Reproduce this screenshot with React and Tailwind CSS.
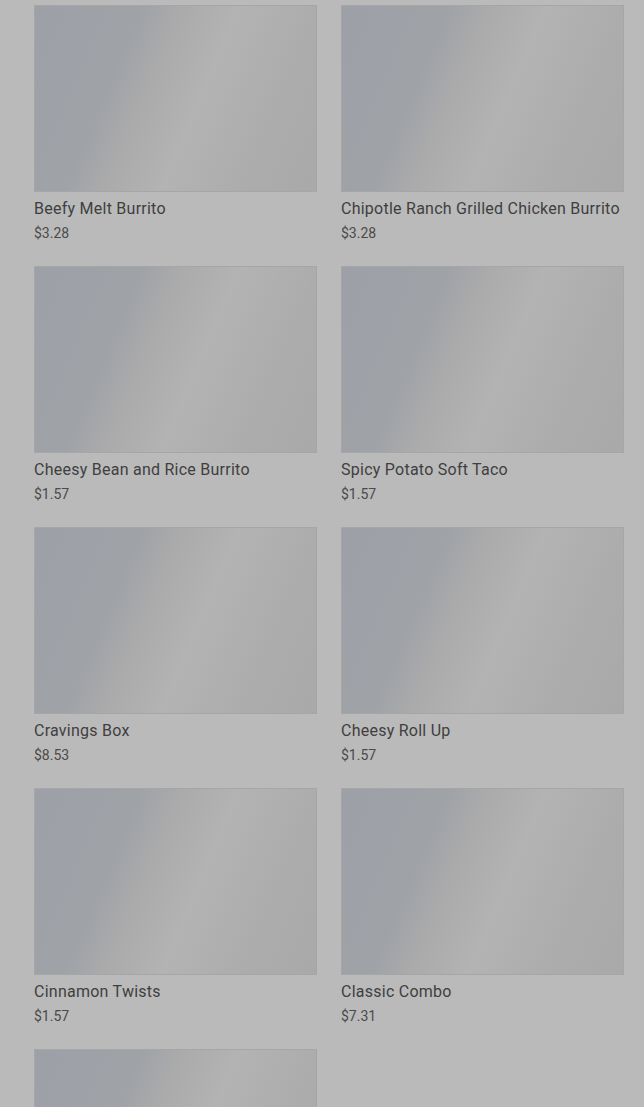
export default function App() {
  const items = [
    ["Beefy Melt Burrito", "$3.28"],
    ["Chipotle Ranch Grilled Chicken Burrito", "$3.28"],
    ["Cheesy Bean and Rice Burrito", "$1.57"],
    ["Spicy Potato Soft Taco", "$1.57"],
    ["Cravings Box", "$8.53"],
    ["Cheesy Roll Up", "$1.57"],
    ["Cinnamon Twists", "$1.57"],
    ["Classic Combo", "$7.31"],
    ["", ""],
  ];
  return (
    <div
      className="h-[1107px] overflow-hidden bg-[#bababa] pl-[34px] pr-[20px] pt-[5px]"
      style={{ fontFamily: "Roboto, 'Liberation Sans', sans-serif" }}
    >
      <div className="grid grid-cols-[283px_283px] gap-x-[24px] gap-y-[23px]">
        {items.map(([name, price], i) => (
          <div key={i} className="flex flex-col">
            <div className="h-[187px] w-[283px] border border-[#a6a6a6] bg-[linear-gradient(113deg,#9da0a6_0%,#9fa2a7_30%,#aaaaab_40%,#b3b3b3_57%,#acacac_80%,#a9a9a9_100%)]" />
            {name && (
              <>
                <div className="mt-[5px] text-[16px] leading-[24px] tracking-[0.25px] text-[#3f3f3f]">{name}</div>
                <div className="mt-[2px] text-[14px] leading-[20px] text-[#4a4a4a]">{price}</div>
              </>
            )}
          </div>
        ))}
      </div>
    </div>
  );
}
